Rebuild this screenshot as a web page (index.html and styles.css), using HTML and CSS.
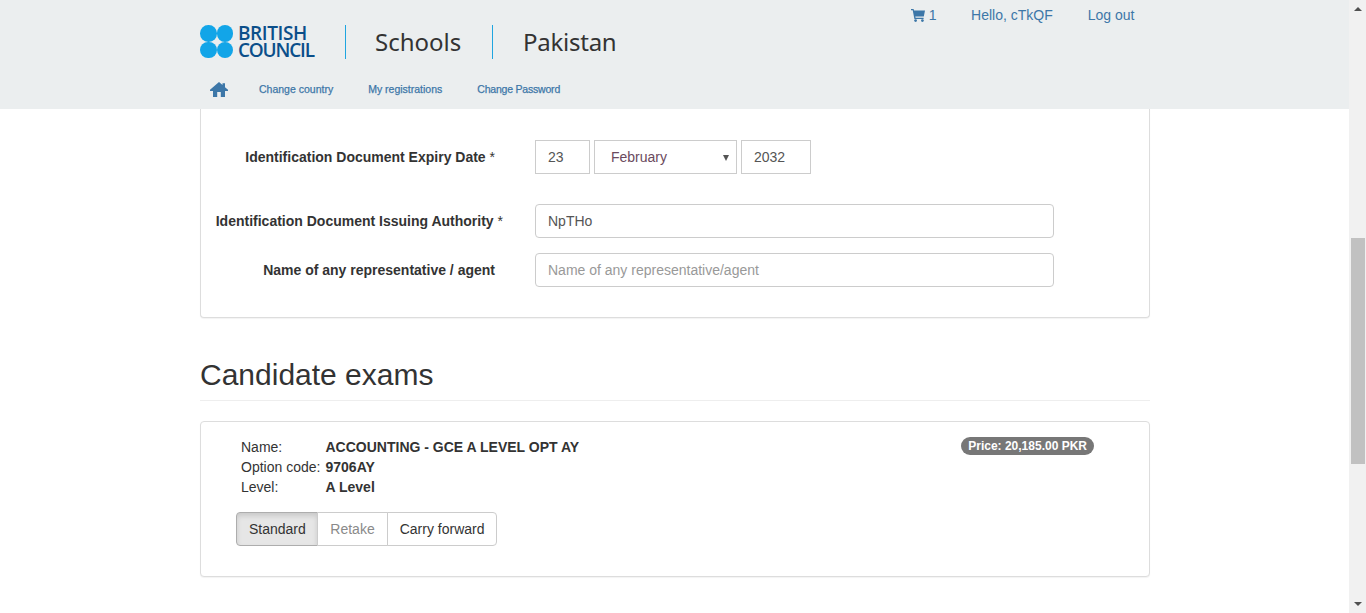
FILE: index.html
```html
<!DOCTYPE html>
<html lang="en">
<head>
  <meta charset="UTF-8">
  <meta name="viewport" content="width=device-width, initial-scale=1.0">
  <title>Schools Pakistan</title>
  <link rel="stylesheet" href="styles.css">
</head>
<body>
  <div class="page">
    <div class="main">
      <header class="site-header">
        <div class="header-inner">
          <div class="header-left">
            <div class="brand-row">
              <a class="logo" href="#">
                <span class="logo-dots"><i></i><i></i><i></i><i></i></span>
                <span class="logo-text">
                  <span class="logo-line-1">BRITISH</span>
                  <span class="logo-line-2">COUNCIL</span>
                </span>
              </a>
              <span class="brand-item brand-schools">Schools</span>
              <span class="brand-item brand-country">Pakistan</span>
            </div>
            <nav class="main-nav">
              <a class="home-link" href="#" aria-label="Home">
                <svg width="18" height="15" viewBox="0 0 18 15"><path d="M9 0 L12.5 3 V1.2 H15 V5.2 L18 7.8 V9 H15 V15 H10.8 V10 H7.2 V15 H3 V9 H0 V7.8 Z" fill="#3d77a8"/></svg>
              </a>
              <a href="#">Change country</a>
              <a class="nav-shift" href="#">My registrations</a>
              <a class="nav-shift nav-tight" href="#">Change Password</a>
            </nav>
          </div>
          <div class="top-links">
            <a class="cart" href="#">
              <svg width="14" height="13" viewBox="0 0 14 13"><path d="M0 0 H2.6 L3 1.6 H14 L12.8 7.4 H4.3 L4.6 8.8 H12.6 V10 H3.4 L1.7 1.2 H0 Z" fill="#3d77a8"/><circle cx="4.6" cy="11.6" r="1.4" fill="#3d77a8"/><circle cx="11.4" cy="11.6" r="1.4" fill="#3d77a8"/></svg>
              1
            </a>
            <a href="#">Hello, cTkQF</a>
            <a href="#">Log out</a>
          </div>
        </div>
      </header>

      <div class="content">
        <section class="card card-cut">
          <div class="form-row form-row-date">
            <label class="form-label">Identification Document Expiry Date <span class="req">*</span></label>
            <div class="date-fields">
              <input class="field field-day" type="text" value="23">
              <div class="select-wrap">
                <select class="field field-month">
                  <option>February</option>
                </select>
              </div>
              <input class="field field-year" type="text" value="2032">
            </div>
          </div>
          <div class="form-row form-row-authority">
            <label class="form-label label-long">Identification Document Issuing Authority <span class="req">*</span></label>
            <input class="field field-wide" type="text" value="NpTHo">
          </div>
          <div class="form-row">
            <label class="form-label">Name of any representative / agent</label>
            <input class="field field-wide" type="text" placeholder="Name of any representative/agent">
          </div>
        </section>

        <h2 class="section-title">Candidate exams</h2>

        <section class="card exam-card">
          <div class="exam-top">
            <dl class="exam-info">
              <dt>Name:</dt>
              <dd>ACCOUNTING - GCE A LEVEL OPT AY</dd>
              <dt>Option code:</dt>
              <dd>9706AY</dd>
              <dt>Level:</dt>
              <dd>A Level</dd>
            </dl>
            <span class="badge">Price: 20,185.00 PKR</span>
          </div>
          <div class="btn-group">
            <button type="button" class="btn active">Standard</button>
            <button type="button" class="btn disabled">Retake</button>
            <button type="button" class="btn">Carry forward</button>
          </div>
        </section>
      </div>
    </div>

    <div class="scrollbar">
      <span class="arrow arrow-up"></span>
      <span class="thumb"></span>
      <span class="arrow arrow-down"></span>
    </div>
  </div>
</body>
</html>
```

FILE: styles.css
```css
/* General styling */
* {
  box-sizing: border-box;
}

html, body {
  height: 100%;
  margin: 0;
  overflow: hidden;
}

body {
  font-family: 'Liberation Sans', Arial, sans-serif;
  font-size: 14px;
  line-height: 20px;
  color: #333;
  background: #fff;
}

a {
  color: #3d77a8;
  text-decoration: none;
}

.page {
  display: flex;
  height: 100%;
}

.main {
  flex: 1;
  min-width: 0;
}

/* Header */
.site-header {
  height: 109px;
  background: #ebeeef;
}

.header-inner {
  display: flex;
  width: 950px;
  margin-left: 200px;
}

.header-left {
  flex: 1;
}

.brand-row {
  display: flex;
  align-items: center;
  height: 34px;
  margin-top: 25px;
}

.logo {
  display: flex;
  align-items: flex-start;
  gap: 5px;
  width: 145px;
  height: 34px;
}

.logo-dots {
  display: grid;
  grid-template-columns: 16.5px 16.5px;
}

.logo-dots i {
  width: 16.5px;
  height: 16.5px;
  border-radius: 50%;
  background: #12a5e8;
}

.logo-text {
  display: flex;
  flex-direction: column;
  font-family: 'Open Sans', sans-serif;
  font-size: 19px;
  font-weight: 600;
  line-height: 17px;
  color: #0b4f8a;
}

.logo-line-1 {
  letter-spacing: -0.4px;
}

.logo-line-2 {
  letter-spacing: -1.2px;
}

.brand-item {
  display: flex;
  align-items: center;
  height: 34px;
  border-left: 1px solid #1fa5e0;
  font-family: 'Noto Sans', sans-serif;
  font-size: 24px;
  color: #333;
}

.brand-schools {
  width: 147px;
  padding-left: 29px;
}

.brand-country {
  padding-left: 30px;
  letter-spacing: -0.25px;
}

.main-nav {
  display: flex;
  align-items: center;
  gap: 34px;
  margin-top: 20px;
  font-size: 10.5px;
  line-height: 20px;
  -webkit-text-stroke: 0.25px #3d77a8;
}

.home-link {
  display: flex;
  margin-left: 10px;
  margin-right: -3px;
}

.nav-shift {
  margin-left: 1px;
}

.nav-tight {
  letter-spacing: -0.2px;
}

.top-links {
  display: flex;
  gap: 35px;
  height: 20px;
  margin-top: 5px;
  padding-right: 15.5px;
}

.cart {
  display: flex;
  align-items: center;
  gap: 4px;
  margin-right: -0.5px;
}

/* Cards */
.content {
  width: 950px;
  margin-left: 200px;
}

.card {
  background: #fff;
  border: 1px solid #ddd;
  border-radius: 4px;
  box-shadow: 0 1px 1px rgba(0, 0, 0, 0.05);
}

.card-cut {
  height: 209px;
  padding-top: 31px;
  border-top: 0;
  border-radius: 0 0 4px 4px;
}

/* Form */
.form-row {
  display: flex;
  align-items: center;
  margin-top: 15px;
}

.form-row-date {
  margin-top: 0;
}

.form-row-authority {
  margin-top: 30px;
}

.form-label {
  flex: none;
  width: 294px;
  margin-right: 40px;
  font-weight: bold;
  text-align: right;
  white-space: nowrap;
}

.label-long {
  width: 302px;
  margin-right: 32px;
}

.req {
  font-weight: normal;
}

.field {
  height: 34px;
  padding: 6px 12px;
  border: 1px solid #ccc;
  border-radius: 4px;
  font-family: inherit;
  font-size: 14px;
  color: #555;
  background: #fff;
  outline: none;
}

.field::placeholder {
  color: #999;
}

.field-wide {
  width: 519px;
}

.date-fields {
  display: flex;
  gap: 4px;
}

.date-fields .field {
  border-radius: 0;
}

.field-day {
  width: 55px;
}

.field-year {
  width: 70px;
}

.select-wrap {
  position: relative;
  width: 143px;
}

.select-wrap::after {
  content: "";
  position: absolute;
  top: 15px;
  right: 8px;
  border-top: 6px solid #555;
  border-left: 3px solid transparent;
  border-right: 3px solid transparent;
}

.field-month {
  width: 100%;
  padding-left: 16px;
  appearance: none;
  color: #6b4a5e;
}

.section-title {
  height: 83px;
  margin: 0 0 20px;
  padding-top: 40px;
  border-bottom: 1px solid #eee;
  font-size: 30px;
  font-weight: normal;
  line-height: 33px;
}

/* Exam card */
.exam-card {
  height: 156px;
  padding: 15px 55px 0 40px;
}

.exam-top {
  display: flex;
  justify-content: space-between;
  align-items: flex-start;
}

.exam-info {
  display: grid;
  grid-template-columns: 84.5px auto;
  margin: 0;
}

.exam-info dd {
  margin: 0;
  font-weight: bold;
}

.badge {
  height: 18px;
  padding: 0 7px;
  border-radius: 10px;
  background: #777;
  color: #fff;
  font-size: 12px;
  font-weight: bold;
  line-height: 18px;
}

.btn-group {
  display: flex;
  margin: 15px 0 0 -5px;
}

.btn {
  height: 34px;
  margin-left: -1px;
  padding: 6px 12px;
  border: 1px solid #ccc;
  background: #fff;
  color: #333;
  font-family: inherit;
  font-size: 14px;
  line-height: 20px;
}

.btn:first-child {
  margin-left: 0;
  padding-right: 11.5px;
  border-radius: 4px 0 0 4px;
}

.btn:last-child {
  border-radius: 0 4px 4px 0;
}

.btn.active {
  background: #e6e6e6;
  border-color: #adadad;
  box-shadow: inset 0 3px 5px rgba(0, 0, 0, 0.125);
}

.btn.disabled {
  color: #8a8a8a;
}

/* Scrollbar as it appears in the window */
.scrollbar {
  display: flex;
  flex: none;
  flex-direction: column;
  align-items: center;
  width: 17px;
  background: #f1f1f1;
}

.thumb {
  width: 14px;
  height: 226px;
  margin-top: 227px;
  background: #c1c1c1;
}

.arrow {
  border-left: 4px solid transparent;
  border-right: 4px solid transparent;
}

.arrow-up {
  margin-top: 7px;
  border-bottom: 4px solid #505050;
}

.arrow-down {
  margin-top: auto;
  margin-bottom: 7px;
  border-top: 4px solid #505050;
}
```
